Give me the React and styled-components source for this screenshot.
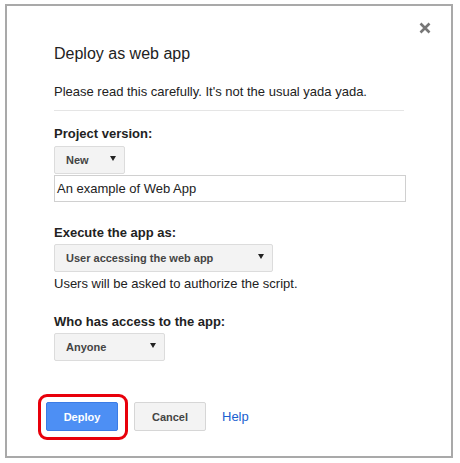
import React from 'react';
import styled, { createGlobalStyle } from 'styled-components';

const Global = createGlobalStyle`
  html, body {
    margin: 0;
    background: #fff;
  }
  body {
    font-family: "Liberation Sans", Arial, sans-serif;
    color: #222;
  }
`;

const Page = styled.div`
  padding: 4px 0 0 5px;
`;

const Dialog = styled.div`
  position: relative;
  box-sizing: border-box;
  width: 448px;
  height: 454px;
  border: 2px solid #a9a9a9;
  background: #fff;
  padding: 38px 0 0 47px;
`;

const Close = styled.button`
  position: absolute;
  top: 16px;
  right: 20px;
  width: 12px;
  height: 12px;
  padding: 0;
  border: none;
  background: none;
  cursor: pointer;
  display: flex;
`;

const Title = styled.h2`
  margin: 0;
  font-size: 16px;
  line-height: 20px;
  font-weight: normal;
  color: #222;
`;

const Text = styled.p`
  margin: ${p => p.$top || 0}px 0 0;
  font-size: 13px;
  line-height: 16px;
`;

const Divider = styled.div`
  width: 350px;
  height: 1px;
  margin-top: 10px;
  background: #e5e5e5;
`;

const Label = styled.div`
  margin-top: ${p => p.$top}px;
  font-size: 13px;
  line-height: 16px;
  font-weight: bold;
`;

const Select = styled.div`
  box-sizing: border-box;
  width: ${p => p.$w}px;
  height: 28px;
  margin-top: ${p => p.$top || 0}px;
  display: flex;
  align-items: center;
  justify-content: space-between;
  padding: 0 8px 0 11px;
  background: #f3f3f3;
  border: 1px solid #dcdcdc;
  border-radius: 2px;
  font-size: 11px;
  font-weight: bold;
  color: #444;
`;

const Arrow = styled.span`
  width: 0;
  height: 0;
  border-left: 3px solid transparent;
  border-right: 3px solid transparent;
  border-top: 5px solid #222;
  margin-top: -4px;
`;

const Input = styled.div`
  box-sizing: border-box;
  width: 352px;
  height: 27px;
  margin-top: 1px;
  display: flex;
  align-items: center;
  padding: 0 2px;
  border: 1px solid #d0d0d0;
  font-size: 13px;
  color: #222;
`;

const Actions = styled.div`
  display: flex;
  align-items: center;
  gap: 16px;
  margin-top: 41px;
  margin-left: -8px;
`;

const Button = styled.button`
  position: relative;
  box-sizing: border-box;
  width: 72px;
  height: 29px;
  padding: 0;
  border-radius: 2px;
  font-family: inherit;
  font-size: 11px;
  font-weight: bold;
  cursor: pointer;
  background: ${p => (p.$primary ? '#4d8ff4' : '#f3f3f3')};
  border: 1px solid ${p => (p.$primary ? '#3b7ce6' : '#d6d6d6')};
  color: ${p => (p.$primary ? '#fff' : '#444')};

  ${p => p.$ring && `
    &::after {
      content: '';
      position: absolute;
      top: -9.5px;
      left: -9.5px;
      right: -10.5px;
      bottom: -9.5px;
      border: 3px solid #e8000b;
      border-radius: 9px;
      pointer-events: none;
    }
  `}
`;

const Help = styled.a`
  font-size: 13px;
  color: #1a5fd0;
  text-decoration: none;
  margin-top: -1px;
`;

export default function App() {
  return (
    <Page>
      <Global />
      <Dialog>
        <Close aria-label="Close">
          <svg width="12" height="12" viewBox="0 0 12 12">
            <path d="M1.5 1.5 L10.5 10.5 M10.5 1.5 L1.5 10.5" stroke="#777" strokeWidth="2.6" />
          </svg>
        </Close>
        <Title>Deploy as web app</Title>
        <Text $top={20}>Please read this carefully. It's not the usual yada yada.</Text>
        <Divider />

        <Label $top={15}>Project version:</Label>
        <Select $w={71} $top={4}>
          New <Arrow />
        </Select>
        <Input>An example of Web App</Input>

        <Label $top={23}>Execute the app as:</Label>
        <Select $w={219} $top={3}>
          User accessing the web app <Arrow />
        </Select>
        <Text $top={4}>Users will be asked to authorize the script.</Text>

        <Label $top={22}>Who has access to the app:</Label>
        <Select $w={111} $top={3}>
          Anyone <Arrow />
        </Select>

        <Actions>
          <Button $primary $ring>Deploy</Button>
          <Button>Cancel</Button>
          <Help href="#">Help</Help>
        </Actions>
      </Dialog>
    </Page>
  );
}
